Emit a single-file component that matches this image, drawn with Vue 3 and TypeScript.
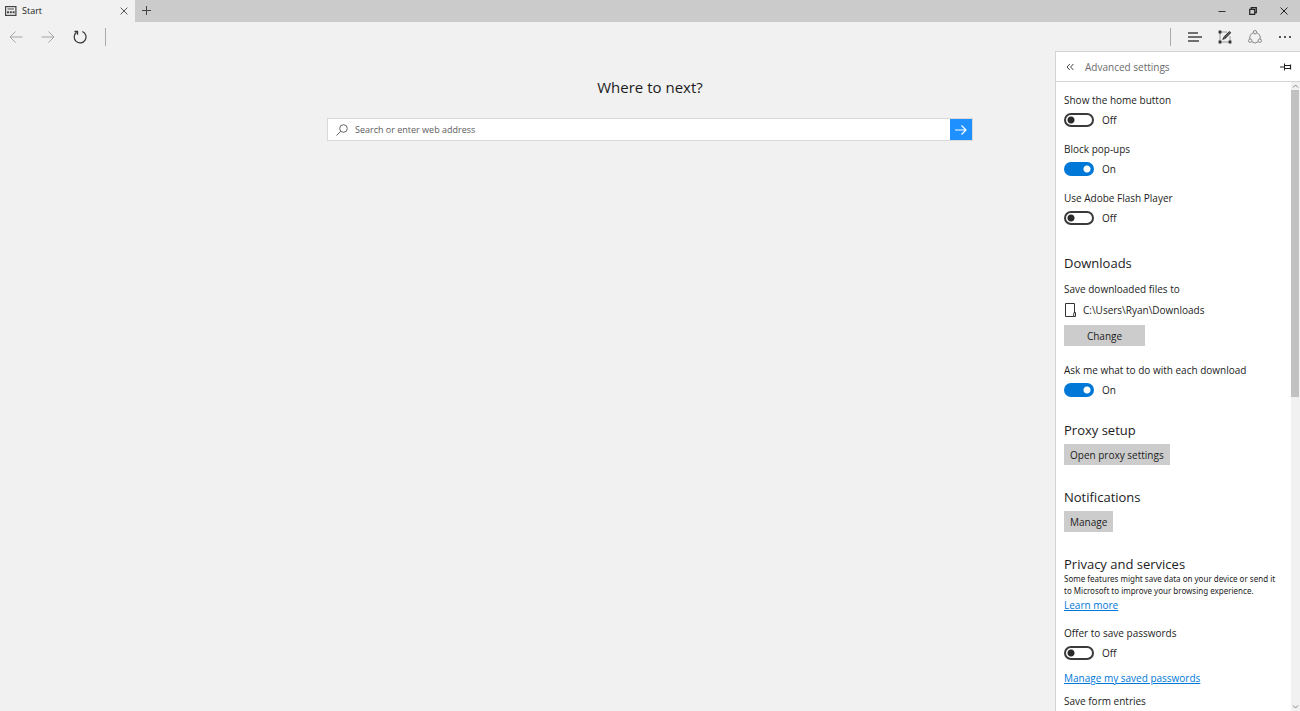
<script setup lang="ts">
import { ref, reactive } from 'vue'

interface Toggle {
  id: string
  label: string
  on: boolean
}

const address = ref('')

const general = reactive<Toggle[]>([
  { id: 'home', label: 'Show the home button', on: false },
  { id: 'popups', label: 'Block pop-ups', on: true },
  { id: 'flash', label: 'Use Adobe Flash Player', on: false },
])
const askDownload = ref(true)
const savePasswords = ref(false)
</script>

<template>
  <div class="browser">
    <header class="titlebar">
      <div class="tab">
        <svg class="tab-icon" width="12" height="10" viewBox="0 0 12 10" fill="none" stroke="#444">
          <rect x="0.600" y="0.600" width="10.300" height="8.800" stroke-width="1.200" />
          <path d="M2.500 3h6.500" />
          <path d="M2 6.300h2M4.800 6.300h2M7.600 6.300h2" stroke-width="2" />
        </svg>
        <span class="tab-title">Start</span>
        <button class="icon-button tab-close" aria-label="Close tab">
          <svg width="8" height="8" viewBox="0 0 8 8" fill="none" stroke="#555"><path d="M.6.600l6.800 6.800M7.400.600L.6 7.400" /></svg>
        </button>
      </div>
      <button class="icon-button new-tab" aria-label="New tab">
        <svg width="10" height="10" viewBox="0 0 10 10" fill="none" stroke="#444"><path d="M4.500 0v9M0 4.500h9" /></svg>
      </button>
      <div class="window-controls">
        <button class="icon-button" aria-label="Minimize">
          <svg width="8" height="8" viewBox="0 0 8 8" stroke="#333"><path d="M.5 4.500h7" /></svg>
        </button>
        <button class="icon-button" aria-label="Restore">
          <svg width="8" height="8" viewBox="0 0 8 8" fill="none" stroke="#222" stroke-width="1.200"><path d="M.7 2.300h5v5h-5zM2.300 2.300V.7h5v5H5.700" /></svg>
        </button>
        <button class="icon-button" aria-label="Close">
          <svg width="8" height="8" viewBox="0 0 8 8" fill="none" stroke="#222"><path d="M.5.500l7 7M7.500.500l-7 7" /></svg>
        </button>
      </div>
    </header>

    <nav class="toolbar">
      <button class="icon-button nav" aria-label="Back">
        <svg width="14" height="12" viewBox="0 0 14 12" fill="none" stroke="#a5a5a5"><path d="M13.500 6H1M6.500.500L1 6l5.500 5.500" /></svg>
      </button>
      <button class="icon-button nav" aria-label="Forward">
        <svg width="14" height="12" viewBox="0 0 14 12" fill="none" stroke="#a5a5a5"><path d="M.5 6H13M7.500.500L13 6l-5.500 5.500" /></svg>
      </button>
      <button class="icon-button nav" aria-label="Refresh">
        <svg width="14" height="14" viewBox="0 0 14 14" fill="none" stroke="#333" stroke-width="1.200"><path d="M9.300 1.500A5.900 5.900 0 1 1 3.500 2.300" /><path d="M1.500 1.500h3v3.200" stroke-width="1.300" /></svg>
      </button>
      <span class="divider"></span>
      <span class="spacer"></span>
      <span class="divider"></span>
      <button class="icon-button tool" aria-label="Hub">
        <svg width="14" height="10" viewBox="0 0 14 10" stroke="#444" stroke-width="1.300"><path d="M0 1h10M0 5h14M0 9h11" /></svg>
      </button>
      <button class="icon-button tool" aria-label="Make a web note">
        <svg width="14" height="14" viewBox="0 0 14 14" fill="none" stroke="#999">
          <path d="M3 2h6M2 3v8M3 12h8M12 11V6" />
          <path d="M6.300 8L12.300 1.800" stroke="#333" stroke-width="2.600" />
          <path d="M6.600 7.700L12 2.100" stroke="#999" stroke-width="0.600" />
          <path d="M4.200 10l1-3 2 2z" fill="#333" stroke="none" />
          <path d="M.6.600h2.800v2.800H.6zM.6 10.600h2.800v2.800H.6zM10.600 10.600h2.800v2.800h-2.800z" fill="#333" stroke="none" />
        </svg>
      </button>
      <button class="icon-button tool" aria-label="Share">
        <svg width="14" height="14" viewBox="0 0 14 14" fill="none" stroke="#888">
          <circle cx="7" cy="2.200" r="1.700" /><circle cx="2.200" cy="10.700" r="1.700" /><circle cx="11.800" cy="10.700" r="1.700" />
          <path d="M5.300 2.800A5.200 5.200 0 0 0 1.900 9M8.700 2.800A5.200 5.200 0 0 1 12.100 9M3.700 11.700a5.200 5.200 0 0 0 6.600 0" />
        </svg>
      </button>
      <button class="icon-button tool" aria-label="More">
        <svg width="14" height="4" viewBox="0 0 14 4" fill="#222"><circle cx="2" cy="2" r="1" /><circle cx="7" cy="2" r="1" /><circle cx="12" cy="2" r="1" /></svg>
      </button>
    </nav>

    <div class="content">
      <main class="start">
        <h1>Where to next?</h1>
        <form class="search" @submit.prevent>
          <label for="address" aria-label="Search or enter web address">
            <svg width="12" height="12" viewBox="0 0 12 12" fill="none" stroke="#666"><circle cx="7.500" cy="4.500" r="3.800" /><path d="M4.800 7.200L.5 11.500" /></svg>
          </label>
          <input id="address" v-model="address" type="text" placeholder="Search or enter web address" />
          <button class="go" aria-label="Go">
            <svg width="12" height="10" viewBox="0 0 12 10" fill="none" stroke="#fff" stroke-width="1.200"><path d="M0 5h11M6.500.500L11 5 6.500 9.500" /></svg>
          </button>
        </form>
      </main>

      <aside class="panel">
        <div class="panel-header">
          <button class="icon-button collapse" aria-label="Back to settings">
            <svg width="8" height="8" viewBox="0 0 8 8" fill="none" stroke="#444"><path d="M3.800 1L1 4l2.800 3M7.400 1L4.600 4l2.800 3" /></svg>
          </button>
          <h2>Advanced settings</h2>
          <button class="icon-button" aria-label="Pin this pane">
            <svg width="12" height="8" viewBox="0 0 12 8" fill="none" stroke="#222"><path d="M0 4h4M4.500.500v7M4.500 2.500h6M4.500 5.500h6" /><path d="M10.500 1.500v5" stroke-width="1.200" /></svg>
          </button>
        </div>

        <div class="panel-body">
          <div class="settings">
            <div v-for="item in general" :key="item.id" class="setting">
              <label :for="item.id">{{ item.label }}</label>
              <div class="switch">
                <input :id="item.id" v-model="item.on" type="checkbox" role="switch" />
                <span>{{ item.on ? 'On' : 'Off' }}</span>
              </div>
            </div>

            <section>
              <h3>Downloads</h3>
              <p class="save-to">Save downloaded files to</p>
              <p class="folder">
                <svg width="12" height="14" viewBox="0 0 12 14" fill="none" stroke="#333"><path d="M10.500 9V.500h-9v13h8M10 9.500h1.500v4H9.500z" /></svg>
                <span>C:\Users\Ryan\Downloads</span>
              </p>
              <button class="push wide">Change</button>
              <div class="setting ask">
                <label for="ask">Ask me what to do with each download</label>
                <div class="switch">
                  <input id="ask" v-model="askDownload" type="checkbox" role="switch" />
                  <span>{{ askDownload ? 'On' : 'Off' }}</span>
                </div>
              </div>
            </section>

            <section>
              <h3>Proxy setup</h3>
              <button class="push">Open proxy settings</button>
            </section>

            <section>
              <h3>Notifications</h3>
              <button class="push">Manage</button>
            </section>

            <section>
              <h3 class="tight">Privacy and services</h3>
              <p class="note">Some features might save data on your device or send it to Microsoft to improve your browsing experience.</p>
              <a href="#learn">Learn more</a>
              <div class="setting offer">
                <label for="passwords">Offer to save passwords</label>
                <div class="switch">
                  <input id="passwords" v-model="savePasswords" type="checkbox" role="switch" />
                  <span>{{ savePasswords ? 'On' : 'Off' }}</span>
                </div>
              </div>
              <a href="#passwords">Manage my saved passwords</a>
              <p class="form-entries">Save form entries</p>
            </section>
          </div>

          <div class="scrollbar" aria-hidden="true">
            <svg width="9" height="8" viewBox="0 0 9 8" fill="none" stroke="#888"><path d="M2 5.500L4.500 3 7 5.500" /></svg>
            <div class="track"><div class="thumb"></div></div>
            <svg width="9" height="8" viewBox="0 0 9 8" fill="none" stroke="#888"><path d="M2 2.500L4.500 5 7 2.500" /></svg>
          </div>
        </div>
      </aside>
    </div>
  </div>
</template>

<style>
body {
  margin: 0;
}
</style>

<style scoped>
.browser,
.browser * {
  box-sizing: border-box;
}

.browser {
  display: flex;
  flex-direction: column;
  height: 100vh;
  overflow: hidden;
  background: #f1f1f1;
  color: #1c1c1c;
  font-family: 'Segoe UI', 'Open Sans', 'Noto Sans', sans-serif;
  font-size: 10px;
  line-height: 16px;
}

h1,
h2,
h3,
p {
  margin: 0;
  font-weight: 400;
}

button,
input {
  font: inherit;
  color: inherit;
}

svg {
  display: block;
  flex: none;
}

.icon-button {
  display: flex;
  align-items: center;
  justify-content: center;
  padding: 0;
  border: 0;
  background: none;
}

.titlebar {
  display: flex;
  flex: none;
  height: 22px;
  background: #cbcbcb;
}

.tab {
  display: flex;
  align-items: center;
  gap: 5px;
  width: 135px;
  padding: 0 6px 0 5px;
  background: #f1f1f1;
}

.tab-title {
  flex: 1;
  font-size: 9px;
}

.tab-close {
  width: 10px;
  height: 16px;
}

.new-tab {
  width: 24px;
}

.window-controls {
  display: flex;
  margin-left: auto;
  padding-right: 1px;
}

.window-controls .icon-button {
  width: 31px;
}

.toolbar {
  display: flex;
  align-items: center;
  flex: none;
  height: 29px;
}

.nav {
  width: 32px;
  height: 28px;
}

.divider {
  width: 1px;
  height: 18px;
  margin: 0 9px;
  background: #aaa;
}

.spacer {
  flex: 1;
}

.tool {
  width: 30px;
  height: 28px;
}

.content {
  position: relative;
  flex: 1;
  min-height: 0;
}

.start {
  display: flex;
  flex-direction: column;
  align-items: center;
  padding-top: 24px;
}

h1 {
  font-size: 15px;
  line-height: 24px;
}

.search {
  display: flex;
  align-items: center;
  width: min(646px, 90%);
  height: 23px;
  margin-top: 19px;
  border: 1px solid #d9d9d9;
  background: #fff;
}

.search label {
  padding: 0 7px 0 8px;
}

.search input {
  flex: 1;
  min-width: 0;
  padding: 0;
  border: 0;
  outline: 0;
  background: none;
  font-size: 9px;
}

.search input::placeholder {
  color: #5c5c5c;
  opacity: 1;
}

.go {
  display: flex;
  align-items: center;
  align-self: stretch;
  justify-content: center;
  width: 22px;
  padding: 0;
  border: 0;
  background: #1e90ff;
}

.panel {
  position: absolute;
  top: 0;
  right: 0;
  bottom: 0;
  display: flex;
  flex-direction: column;
  width: 245px;
  border: solid #d4d4d4;
  border-width: 1px 0 0 1px;
  background: #fff;
}

.panel-header {
  display: flex;
  align-items: center;
  flex: none;
  height: 30px;
  padding: 0 8px 0 10px;
  border-bottom: 1px solid #d4d4d4;
}

h2 {
  flex: 1;
  margin-left: 11px;
  color: #6b6b6b;
  font-size: 10px;
  line-height: 16px;
}

.panel-body {
  display: flex;
  flex: 1;
  min-height: 0;
}

.settings {
  flex: 1;
  min-width: 0;
  padding: 10px 6px 0 8px;
  overflow: hidden;
}

.setting {
  margin-bottom: 13px;
}

.setting label {
  display: block;
}

.switch {
  display: flex;
  align-items: center;
  gap: 8px;
  margin-top: 4px;
}

.switch input {
  width: 30px;
  height: 14px;
  margin: 0;
  border: 2px solid #3a3a3a;
  border-radius: 7px;
  appearance: none;
  background: radial-gradient(circle at 5px 5px, #2b2b2b 3px, transparent 4px);
}

.switch input:checked {
  border-color: #0078d7;
  background: radial-gradient(circle at 21px 5px, #fff 3px, #0078d7 4px);
}

section {
  margin-bottom: 22px;
}

.setting + section {
  margin-top: 27px;
}

h3 {
  margin-bottom: 4px;
  font-size: 13px;
  line-height: 20px;
}

h3.tight {
  margin-bottom: -1px;
}

.save-to {
  margin-top: 8px;
}

.folder {
  display: flex;
  align-items: center;
  gap: 7px;
  margin: 5px 0 7px;
}

.push {
  display: block;
  height: 21px;
  padding: 0 6px;
  border: 0;
  background: #ccc;
}

.push.wide {
  min-width: 81px;
}

.setting.ask {
  margin-top: 16px;
}

.note {
  padding-right: 8px;
  font-family: 'Segoe UI', 'Noto Sans', sans-serif;
  font-size: 8px;
  line-height: 12px;
}

a {
  display: block;
  width: fit-content;
  color: #0078d7;
  text-decoration: underline;
}

.setting.offer {
  margin: 12px 0 9px;
}

.form-entries {
  margin-top: 7px;
}

.scrollbar {
  display: flex;
  flex-direction: column;
  flex: none;
  width: 9px;
  background: #f1f1f1;
}

.track {
  flex: 1;
}

.thumb {
  width: 8px;
  height: 50%;
  background: #c1c1c1;
}
</style>
